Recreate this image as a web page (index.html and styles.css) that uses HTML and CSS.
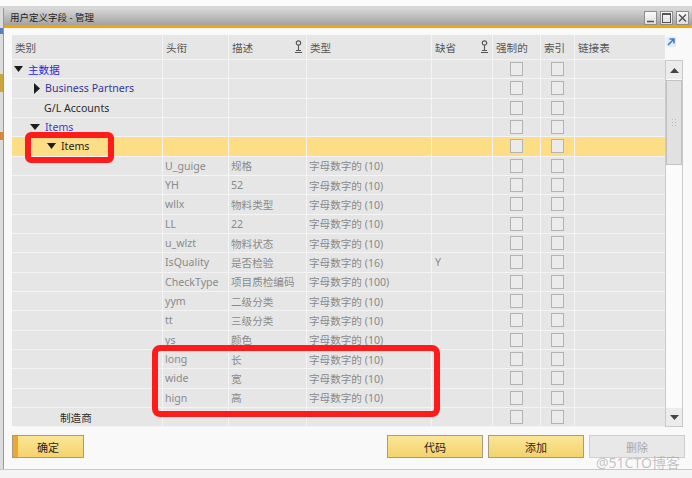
FILE: index.html
```html
<!DOCTYPE html>
<html lang="zh">
<head>
  <meta charset="UTF-8">
  <title>用户定义字段 - 管理</title>
  <link rel="stylesheet" href="styles.css">
</head>
<body>
  <div class="top-strip"></div>
  <div class="main">
    <div class="bg-left">
      <i class="bit bit-blue"></i>
      <i class="bit bit-yellow"></i>
      <i class="bit bit-orange"></i>
    </div>
    <div class="dialog">
      <div class="titlebar">
        <span class="title">用户定义字段 - 管理</span>
        <div class="winbtns">
          <span class="wb"><svg width="11" height="12" viewBox="0 0 11 12"><path d="M2 9.5H9" stroke="#555" stroke-width="1.5"/></svg></span>
          <span class="wb"><svg width="11" height="12" viewBox="0 0 11 12"><rect x="1.5" y="1.5" width="8" height="9" fill="none" stroke="#555"/><path d="M1.5 2.5H9.5" stroke="#555"/></svg></span>
          <span class="wb"><svg width="11" height="12" viewBox="0 0 11 12"><path d="M2 2.5L9 9.5M9 2.5L2 9.5" stroke="#555" stroke-width="1.5"/></svg></span>
        </div>
      </div>

      <div class="content">
        <div class="grid-area">
          <div class="table">
            <div class="row head">
              <div class="c">类别</div>
              <div class="c">头衔</div>
              <div class="c key-cell">描述<svg class="key" width="7" height="13" viewBox="0 0 7 13"><circle cx="3.5" cy="3" r="2.2" fill="none" stroke="#555" stroke-width="1.2"/><path d="M3.5 5.2V10.5M1 10.5H6M0 12.5H7" stroke="#555" stroke-width="1.1"/></svg></div>
              <div class="c">类型</div>
              <div class="c key-cell">缺省<svg class="key" width="7" height="13" viewBox="0 0 7 13"><circle cx="3.5" cy="3" r="2.2" fill="none" stroke="#555" stroke-width="1.2"/><path d="M3.5 5.2V10.5M1 10.5H6M0 12.5H7" stroke="#555" stroke-width="1.1"/></svg></div>
              <div class="c">强制的</div>
              <div class="c">索引</div>
              <div class="c">链接表</div>
            </div>

            <div class="row">
              <div class="c tree lv0"><svg class="tri-down" width="9" height="6" viewBox="0 0 9 6"><path d="M0 0H9L4.5 6Z"/></svg><span class="node-main">主数据</span></div>
              <div class="c"></div><div class="c"></div><div class="c"></div><div class="c"></div>
              <div class="c cbx"><i class="cb"></i></div><div class="c cbx"><i class="cb"></i></div><div class="c"></div>
            </div>
            <div class="row">
              <div class="c tree lv1"><svg class="tri-right" width="6" height="11" viewBox="0 0 6 11"><path d="M0 0L6 5.5L0 11Z"/></svg><span class="node-bp">Business Partners</span></div>
              <div class="c"></div><div class="c"></div><div class="c"></div><div class="c"></div>
              <div class="c cbx"><i class="cb"></i></div><div class="c cbx"><i class="cb"></i></div><div class="c"></div>
            </div>
            <div class="row">
              <div class="c tree lv1-leaf"><span class="node-plain">G/L Accounts</span></div>
              <div class="c"></div><div class="c"></div><div class="c"></div><div class="c"></div>
              <div class="c cbx"><i class="cb"></i></div><div class="c cbx"><i class="cb"></i></div><div class="c"></div>
            </div>
            <div class="row">
              <div class="c tree lv1-open"><svg class="tri-down" width="10" height="6" viewBox="0 0 10 6"><path d="M0 0H10L5 6Z"/></svg><span class="node-items">Items</span></div>
              <div class="c"></div><div class="c"></div><div class="c"></div><div class="c"></div>
              <div class="c cbx"><i class="cb"></i></div><div class="c cbx"><i class="cb"></i></div><div class="c"></div>
            </div>
            <div class="row selected">
              <div class="c tree lv2"><svg class="tri-down" width="9" height="6" viewBox="0 0 9 6"><path d="M0 0H9L4.5 6Z"/></svg><span class="node-sel">Items</span></div>
              <div class="c"></div><div class="c"></div><div class="c"></div><div class="c"></div>
              <div class="c cbx"><i class="cb"></i></div><div class="c cbx"><i class="cb"></i></div><div class="c"></div>
            </div>

            <div class="row data">
              <div class="c"></div><div class="c">U_guige</div><div class="c">规格</div><div class="c">字母数字的 (10)</div><div class="c"></div>
              <div class="c cbx"><i class="cb"></i></div><div class="c cbx"><i class="cb"></i></div><div class="c"></div>
            </div>
            <div class="row data">
              <div class="c"></div><div class="c">YH</div><div class="c">52</div><div class="c">字母数字的 (10)</div><div class="c"></div>
              <div class="c cbx"><i class="cb"></i></div><div class="c cbx"><i class="cb"></i></div><div class="c"></div>
            </div>
            <div class="row data">
              <div class="c"></div><div class="c">wllx</div><div class="c">物料类型</div><div class="c">字母数字的 (10)</div><div class="c"></div>
              <div class="c cbx"><i class="cb"></i></div><div class="c cbx"><i class="cb"></i></div><div class="c"></div>
            </div>
            <div class="row data">
              <div class="c"></div><div class="c">LL</div><div class="c">22</div><div class="c">字母数字的 (10)</div><div class="c"></div>
              <div class="c cbx"><i class="cb"></i></div><div class="c cbx"><i class="cb"></i></div><div class="c"></div>
            </div>
            <div class="row data">
              <div class="c"></div><div class="c">u_wlzt</div><div class="c">物料状态</div><div class="c">字母数字的 (10)</div><div class="c"></div>
              <div class="c cbx"><i class="cb"></i></div><div class="c cbx"><i class="cb"></i></div><div class="c"></div>
            </div>
            <div class="row data">
              <div class="c"></div><div class="c">IsQuality</div><div class="c">是否检验</div><div class="c">字母数字的 (16)</div><div class="c dflt">Y</div>
              <div class="c cbx"><i class="cb"></i></div><div class="c cbx"><i class="cb"></i></div><div class="c"></div>
            </div>
            <div class="row data">
              <div class="c"></div><div class="c">CheckType</div><div class="c">项目质检编码</div><div class="c">字母数字的 (100)</div><div class="c"></div>
              <div class="c cbx"><i class="cb"></i></div><div class="c cbx"><i class="cb"></i></div><div class="c"></div>
            </div>
            <div class="row data">
              <div class="c"></div><div class="c">yym</div><div class="c">二级分类</div><div class="c">字母数字的 (10)</div><div class="c"></div>
              <div class="c cbx"><i class="cb"></i></div><div class="c cbx"><i class="cb"></i></div><div class="c"></div>
            </div>
            <div class="row data">
              <div class="c"></div><div class="c">tt</div><div class="c">三级分类</div><div class="c">字母数字的 (10)</div><div class="c"></div>
              <div class="c cbx"><i class="cb"></i></div><div class="c cbx"><i class="cb"></i></div><div class="c"></div>
            </div>
            <div class="row data">
              <div class="c"></div><div class="c">ys</div><div class="c">颜色</div><div class="c">字母数字的 (10)</div><div class="c"></div>
              <div class="c cbx"><i class="cb"></i></div><div class="c cbx"><i class="cb"></i></div><div class="c"></div>
            </div>
            <div class="row data">
              <div class="c"></div><div class="c">long</div><div class="c">长</div><div class="c">字母数字的 (10)</div><div class="c"></div>
              <div class="c cbx"><i class="cb"></i></div><div class="c cbx"><i class="cb"></i></div><div class="c"></div>
            </div>
            <div class="row data">
              <div class="c"></div><div class="c">wide</div><div class="c">宽</div><div class="c">字母数字的 (10)</div><div class="c"></div>
              <div class="c cbx"><i class="cb"></i></div><div class="c cbx"><i class="cb"></i></div><div class="c"></div>
            </div>
            <div class="row data">
              <div class="c"></div><div class="c">hign</div><div class="c">高</div><div class="c">字母数字的 (10)</div><div class="c"></div>
              <div class="c cbx"><i class="cb"></i></div><div class="c cbx"><i class="cb"></i></div><div class="c"></div>
            </div>
            <div class="row">
              <div class="c tree lv-maker"><span class="node-plain">制造商</span></div>
              <div class="c"></div><div class="c"></div><div class="c"></div><div class="c"></div>
              <div class="c cbx"><i class="cb"></i></div><div class="c cbx"><i class="cb"></i></div><div class="c"></div>
            </div>
          </div>

          <div class="side">
            <div class="expand">
              <svg width="10" height="10" viewBox="0 0 10 10"><rect width="10" height="10" fill="#e3edf7"/><path d="M2 8L8 2M3.5 2H8V6.5" fill="none" stroke="#3d7fd0" stroke-width="1.6"/></svg>
            </div>
            <div class="scrollbar">
              <div class="sb-btn"><svg width="9" height="5" viewBox="0 0 9 5"><path d="M0 5H9L4.5 0Z" fill="#444"/></svg></div>
              <div class="sb-thumb">
                <svg width="4" height="7" viewBox="0 0 4 7"><g fill="#b8b8b8"><rect x="0" y="0" width="1" height="1"/><rect x="3" y="0" width="1" height="1"/><rect x="0" y="3" width="1" height="1"/><rect x="3" y="3" width="1" height="1"/><rect x="0" y="6" width="1" height="1"/><rect x="3" y="6" width="1" height="1"/></g></svg>
              </div>
              <div class="sb-track"></div>
              <div class="sb-btn"><svg width="9" height="5" viewBox="0 0 9 5"><path d="M0 0H9L4.5 5Z" fill="#444"/></svg></div>
            </div>
          </div>
        </div>

        <div class="buttons">
          <button class="btn btn-ok">确定</button>
          <button class="btn btn-code">代码</button>
          <button class="btn">添加</button>
          <button class="btn btn-off">删除</button>
        </div>
      </div>
    </div>
  </div>
  <div class="bottom-strip"></div>

  <div class="mark mark-items"></div>
  <div class="mark mark-fields"></div>
  <div class="watermark">@51CTO博客</div>
</body>
</html>
```

FILE: styles.css
```css
* {
  box-sizing: border-box;
}
body {
  margin: 0;
  width: 692px;
  height: 478px;
  overflow: hidden;
  position: relative;
  background: #efefef;
  font-family: "Noto Sans", "Noto Sans CJK SC", sans-serif;
  font-size: 10.6px;
  color: #333;
}
.top-strip {
  height: 8px;
  background: #fbfbfb;
  border-bottom: 2px solid #d6d6d6;
}
.main {
  display: flex;
  height: 461px;
}
.bg-left {
  width: 3px;
  background: #dcdcdc;
  display: flex;
  flex-direction: column;
  padding-top: 20px;
  gap: 40px;
}
.bit {
  display: block;
  height: 14px;
}
.bit-blue { background: #5a7fb8; height: 6px; }
.bit-yellow { background: #c9a640; height: 18px; }
.bit-orange { background: #d08a3a; height: 8px; }
.bottom-strip {
  height: 9px;
  background: #f4f4f4;
  border-top: 1px solid #c8c8c8;
}

.dialog {
  flex: 1;
  display: flex;
  flex-direction: column;
  background: #f9f9f9;
  border-left: 1px solid #9a9a9a;
}
.titlebar {
  height: 20px;
  display: flex;
  justify-content: space-between;
  align-items: center;
  padding: 0 3px 3px 6px;
  background: linear-gradient(#dadada, #a2a2a2 17px, #f5a500 17px);
}
.title {
  font-size: 9.5px;
  color: #1e1e1e;
}
.winbtns {
  display: flex;
  gap: 3px;
  margin-top: 3px;
}
.wb {
  width: 13px;
  height: 14px;
  display: flex;
  align-items: center;
  justify-content: center;
  background: linear-gradient(#fafafa, #dedede);
  border: 1px solid #8e8e8e;
}

.content {
  padding: 7px 0 0 8px;
}
.grid-area {
  display: flex;
}
.table {
  width: 653px;
  display: flex;
  flex-direction: column;
  gap: 1px;
  background: #f4f4f4;
}
.row {
  display: grid;
  grid-template-columns: 150px 65px 77px 124px 60px 47px 33px 90px;
  gap: 1px;
  height: 18.33px;
}
.row.head {
  height: 24px;
}
.c {
  background: #e6e6e6;
  display: flex;
  align-items: center;
  padding-left: 2px;
  white-space: nowrap;
  overflow: hidden;
}
.head .c {
  align-items: flex-start;
  padding: 5px 0 0 3px;
  color: #555;
}
.key-cell {
  justify-content: space-between;
}
.key {
  margin: 0 4px 0 0;
}
.selected .c {
  background: #fddd85;
}
.data .c {
  color: #8a8a8a;
}
.dflt {
  padding-left: 3px;
}
.cbx {
  justify-content: center;
  padding-left: 0;
}
.cb {
  display: block;
  width: 13px;
  height: 14px;
  border: 1px solid #b3b3b3;
  background: #ebebeb;
}

.tree svg {
  fill: #1c1c1c;
  margin-right: 5px;
}
.lv0 { padding-left: 2px; }
.lv1 { padding-left: 22px; }
.lv1-leaf { padding-left: 32px; }
.lv1-open { padding-left: 18px; }
.lv2 { padding-left: 35px; }
.lv-maker { padding-left: 48px; }
.node-main { color: #2a2ae0; }
.node-bp { color: #35359c; }
.node-items { color: #3c3cc8; }
.node-sel { color: #1e1e1e; }
.node-plain { color: #2b2b2b; }

.side {
  width: 19px;
}
.expand {
  height: 25px;
  padding: 1px 0 0 1px;
}
.scrollbar {
  width: 18px;
  height: 367.3px;
  border: 1px solid #c9c9c9;
  background: #fbfbfb;
  display: flex;
  flex-direction: column;
}
.sb-btn {
  height: 18px;
  display: flex;
  align-items: center;
  justify-content: center;
  background: #ececec;
}
.sb-thumb {
  height: 85px;
  margin-top: 1px;
  background: #e1e1e1;
  border: 1px solid #c2c2c2;
  display: flex;
  align-items: center;
  justify-content: center;
}
.sb-track {
  flex: 1;
}

.buttons {
  display: flex;
  gap: 5px;
  margin-top: 8px;
  padding-right: 7px;
}
.btn {
  height: 23px;
  width: 96px;
  font-family: inherit;
  font-size: 11px;
  color: #262626;
  border: 1px solid #a59c84;
  background: linear-gradient(#fbe597, #f3d36c);
  padding: 0;
}
.btn-ok {
  width: 72px;
  box-shadow: inset 5px 0 0 #f2a52c;
}
.btn-code {
  margin-left: auto;
}
.btn-off {
  color: #a9a9a9;
  border-color: #cfcfcf;
  background: #e8e8e8;
}

.mark {
  position: absolute;
  border: 6px solid #fe1b1b;
}
.mark-items {
  left: 25px;
  top: 132px;
  width: 89px;
  height: 31px;
  border-radius: 6px;
}
.mark-fields {
  left: 152px;
  top: 345px;
  width: 288px;
  height: 72px;
  border-radius: 8px;
}
.watermark {
  position: absolute;
  left: 596px;
  top: 456px;
  font-size: 14px;
  line-height: 13px;
  color: rgba(150, 150, 150, 0.55);
}
```
